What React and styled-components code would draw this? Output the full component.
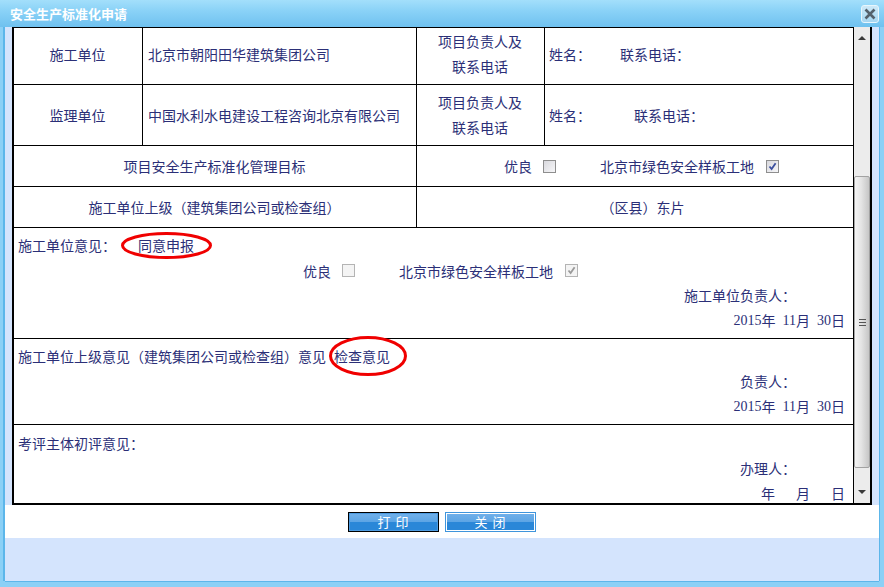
import React from "react";
import styled, { createGlobalStyle } from "styled-components";

const GlobalStyle = createGlobalStyle`
  html, body {
    margin: 0;
    padding: 0;
    background: #8bd0f6;
  }
  * {
    box-sizing: border-box;
  }
`;

const Mark = ({ width, height }) => (
  <RedRing width={width} height={height} viewBox={`0 0 ${width} ${height}`}>
    <ellipse
      cx={width / 2}
      cy={height / 2}
      rx={width / 2 - 1.5}
      ry={height / 2 - 1.5}
      fill="none"
      stroke="#f00000"
      strokeWidth="3"
    />
  </RedRing>
);

const CheckBox = ({ checked, disabled }) => (
  <Check $disabled={disabled} $gap={checked ? 12 : 11}>
    {checked && (
      <svg width="11" height="11" viewBox="0 0 11 11">
        <path
          d="M2.5 5.5 L4.6 8 L8.6 2.2"
          fill="none"
          stroke={disabled ? "#9a9a9a" : "#3b4f9e"}
          strokeWidth="1.8"
        />
      </svg>
    )}
  </Check>
);

const FullDate = () => (
  <DateLine>
    <Num>2015</Num>年<DateGap $w={7} />
    <Num>11</Num>月<DateGap $w={7} />
    <Num>30</Num>日
  </DateLine>
);

export default function App() {
  return (
    <Win>
      <GlobalStyle />
      <TitleBar>
        <Title>安全生产标准化申请</Title>
        <CloseBtn>
          <svg width="12" height="12" viewBox="0 0 12 12">
            <path d="M1.5 1.5 L10.5 10.5 M10.5 1.5 L1.5 10.5" stroke="#55616c" strokeWidth="2.6" />
          </svg>
        </CloseBtn>
      </TitleBar>
      <Body>
        <Panel>
          <Sheet>
            <Row $h={57} $lift={4} $cols="129px 274px 128px 1fr">
              <Cell $center>施工单位</Cell>
              <Cell $inset={5}>北京市朝阳田华建筑集团公司</Cell>
              <Cell $center $tall>
                项目负责人及
                <br />
                联系电话
              </Cell>
              <Cell>
                <Person $w={71}>姓名：</Person>
                <span>联系电话：</span>
              </Cell>
            </Row>
            <Row $h={61} $cols="129px 274px 128px 1fr">
              <Cell $center>监理单位</Cell>
              <Cell $inset={5}>中国水利水电建设工程咨询北京有限公司</Cell>
              <Cell $center $tall>
                项目负责人及
                <br />
                联系电话
              </Cell>
              <Cell>
                <Person $w={85}>姓名：</Person>
                <span>联系电话：</span>
              </Cell>
            </Row>
            <Row $h={41} $cols="403px 1fr">
              <Cell $center>项目安全生产标准化管理目标</Cell>
              <Cell>
                <Choices $left={83}>
                  <span>优良</span>
                  <CheckBox />
                  <Gap $w={44} />
                  <span>北京市绿色安全样板工地</span>
                  <CheckBox checked />
                </Choices>
              </Cell>
            </Row>
            <Row $h={41} $cols="403px 1fr">
              <Cell $center>施工单位上级（建筑集团公司或检查组）</Cell>
              <Cell $center $shift={16}>（区县）东片</Cell>
            </Row>
            <Block $h={111} $pad={5}>
              <Line>
                施工单位意见：<Opinion $left={22}>同意申报</Opinion>
              </Line>
              <Choices $left={285}>
                <span>优良</span>
                <CheckBox disabled />
                <Gap $w={44} />
                <span>北京市绿色安全样板工地</span>
                <CheckBox checked disabled />
              </Choices>
              <Sign $right={49}>施工单位负责人：</Sign>
              <FullDate />
              <MarkSlot $left={107} $top={4}>
                <Mark width={91} height={27} />
              </MarkSlot>
            </Block>
            <Block $h={86} $pad={5}>
              <Line>
                施工单位上级意见（建筑集团公司或检查组）意见<Opinion $left={8}>检查意见</Opinion>
              </Line>
              <Sign $right={49}>负责人：</Sign>
              <FullDate />
              <MarkSlot $left={315} $top={-3}>
                <Mark width={78} height={40} />
              </MarkSlot>
            </Block>
            <Block $h={78} $pad={6} $last>
              <Line>考评主体初评意见：</Line>
              <Sign $right={49}>办理人：</Sign>
              <DateLine>
                年<DateGap $w={21} />月<DateGap $w={21} />日
              </DateLine>
            </Block>
          </Sheet>
          <ScrollBar>
            <ArrowBtn>
              <UpTri />
            </ArrowBtn>
            <Thumb>
              <Grip />
            </Thumb>
            <ScrollRest />
            <ArrowBtn>
              <DownTri />
            </ArrowBtn>
          </ScrollBar>
        </Panel>
        <Buttons>
          <ActionBtn $focus>打 印</ActionBtn>
          <ActionBtn>关 闭</ActionBtn>
        </Buttons>
        <Footer />
      </Body>
    </Win>
  );
}

const Win = styled.div`
  width: 884px;
  height: 587px;
  display: flex;
  flex-direction: column;
  overflow: hidden;
  background: #8bd0f6;
  font-family: "Noto Sans CJK SC", "Liberation Sans", sans-serif;
`;

const TitleBar = styled.div`
  height: 27px;
  flex: none;
  display: flex;
  align-items: center;
  justify-content: space-between;
  padding: 0 5px 0 10px;
  background: linear-gradient(to bottom, #a3dffb 0%, #8ad2f7 40%, #6fc1ef 100%);
`;

const Title = styled.div`
  color: #fff;
  font-size: 13px;
  font-weight: 700;
  line-height: 27px;
`;

const CloseBtn = styled.div`
  width: 18px;
  height: 18px;
  display: flex;
  align-items: center;
  justify-content: center;
  border: 1px solid #e8f6fd;
  border-radius: 3px;
  background: linear-gradient(to bottom, #cde9f8, #a7d6f1);
`;

const Body = styled.div`
  flex: 1;
  display: flex;
  flex-direction: column;
  margin: 0 5px 6px;
  background: #fff;
  box-shadow: -2px 0 0 #5cb6ea, 1px 0 0 #5cb6ea, 0 1px 0 #5cb6ea;
`;

const Panel = styled.div`
  height: 478px;
  flex: none;
  display: flex;
  margin: 0 7px;
  border: 2px solid #000;
  border-top: 0;
  box-shadow: -7px 0 0 #d4e4fd, 7px 0 0 #d4e4fd;
  background: #fff;
`;

const Sheet = styled.div`
  width: 840px;
  flex: none;
  display: flex;
  flex-direction: column;
  border-top: 1px solid #000;
  border-right: 1px solid #000;
  color: #2b2f77;
  font-size: 14px;
`;

const Row = styled.div`
  height: ${(p) => p.$h}px;
  flex: none;
  display: grid;
  grid-template-columns: ${(p) => p.$cols};
  border-bottom: 1px solid #000;
  & > * {
    padding-bottom: ${(p) => p.$lift || 0}px;
  }
`;

const Cell = styled.div`
  display: flex;
  align-items: center;
  justify-content: ${(p) => (p.$center ? "center" : "flex-start")};
  padding-left: ${(p) => (p.$center ? 4 + (p.$shift || 0) : p.$inset || 4)}px;
  padding-right: 5px;
  text-align: ${(p) => (p.$center ? "center" : "left")};
  line-height: ${(p) => (p.$tall ? "25px" : "20px")};
  border-right: 1px solid #000;
  &:last-child {
    border-right: 0;
  }
`;

const Person = styled.span`
  display: inline-block;
  width: ${(p) => p.$w}px;
`;

const Choices = styled.div`
  display: flex;
  align-items: center;
  height: 25px;
  padding-left: ${(p) => p.$left}px;
`;

const Gap = styled.span`
  display: inline-block;
  width: ${(p) => p.$w}px;
`;

const Check = styled.span`
  width: 13px;
  height: 13px;
  margin-left: ${(p) => p.$gap}px;
  display: inline-flex;
  align-items: center;
  justify-content: center;
  border: 1px solid ${(p) => (p.$disabled ? "#b4b4b4" : "#8e8e8e")};
  background: ${(p) =>
    p.$disabled ? "#f4f4f4" : "linear-gradient(135deg, #d9d9de, #f6f6f8)"};
`;

const Block = styled.div`
  position: relative;
  height: ${(p) => p.$h}px;
  flex: none;
  padding: ${(p) => p.$pad}px 8px 0 4px;
  border-bottom: ${(p) => (p.$last ? "0" : "1px solid #000")};
`;

const Line = styled.div`
  height: 25px;
  line-height: 25px;
  white-space: nowrap;
`;

const Opinion = styled.span`
  margin-left: ${(p) => p.$left}px;
`;

const Sign = styled(Line)`
  text-align: right;
  padding-right: ${(p) => p.$right}px;
`;

const DateLine = styled(Line)`
  display: flex;
  justify-content: flex-end;
`;

const Num = styled.span`
  font-family: "Liberation Serif", serif;
`;

const DateGap = styled.span`
  display: inline-block;
  width: ${(p) => p.$w}px;
`;

const MarkSlot = styled.div`
  position: absolute;
  left: ${(p) => p.$left}px;
  top: ${(p) => p.$top}px;
  z-index: 2;
  line-height: 0;
`;

const RedRing = styled.svg`
  display: block;
`;

const ScrollBar = styled.div`
  width: 16px;
  flex: none;
  display: flex;
  flex-direction: column;
  background: #ececec;
`;

const ArrowBtn = styled.div`
  height: 18px;
  flex: none;
  display: flex;
  align-items: center;
  justify-content: center;
`;

const UpTri = styled.span`
  margin-top: 4px;
  border-left: 4px solid transparent;
  border-right: 4px solid transparent;
  border-bottom: 4px solid #3a3a3a;
`;

const DownTri = styled.span`
  margin-top: -4px;
  border-left: 4px solid transparent;
  border-right: 4px solid transparent;
  border-top: 4px solid #3a3a3a;
`;

const Thumb = styled.div`
  height: 292px;
  flex: none;
  margin-top: 131px;
  display: flex;
  align-items: center;
  justify-content: center;
  border: 1px solid #a2a2a2;
  border-radius: 2px;
  background: linear-gradient(to right, #f4f4f4, #e4e4e4 45%, #c6c6c6);
`;

const Grip = styled.span`
  width: 7px;
  height: 7px;
  background: repeating-linear-gradient(to bottom, #555 0 1px, transparent 1px 3px);
`;

const ScrollRest = styled.div`
  flex: 1;
`;

const Buttons = styled.div`
  height: 33px;
  flex: none;
  display: flex;
  align-items: center;
  justify-content: center;
  gap: 6px;
  background: #fff;
`;

const ActionBtn = styled.div`
  width: 91px;
  height: 20px;
  display: flex;
  align-items: center;
  justify-content: center;
  color: #fff;
  font-size: 13px;
  letter-spacing: 1px;
  border: 1px solid ${(p) => (p.$focus ? "#000" : "#3f95dc")};
  box-shadow: inset 0 0 0 1px ${(p) => (p.$focus ? "#4d9be0" : "#fff")};
  background: linear-gradient(to bottom, #72b1ea 0%, #5da5e5 48%, #2a87d8 50%, #2a87d8 100%);
`;

const Footer = styled.div`
  flex: 1;
  background: #d4e4fd;
`;
